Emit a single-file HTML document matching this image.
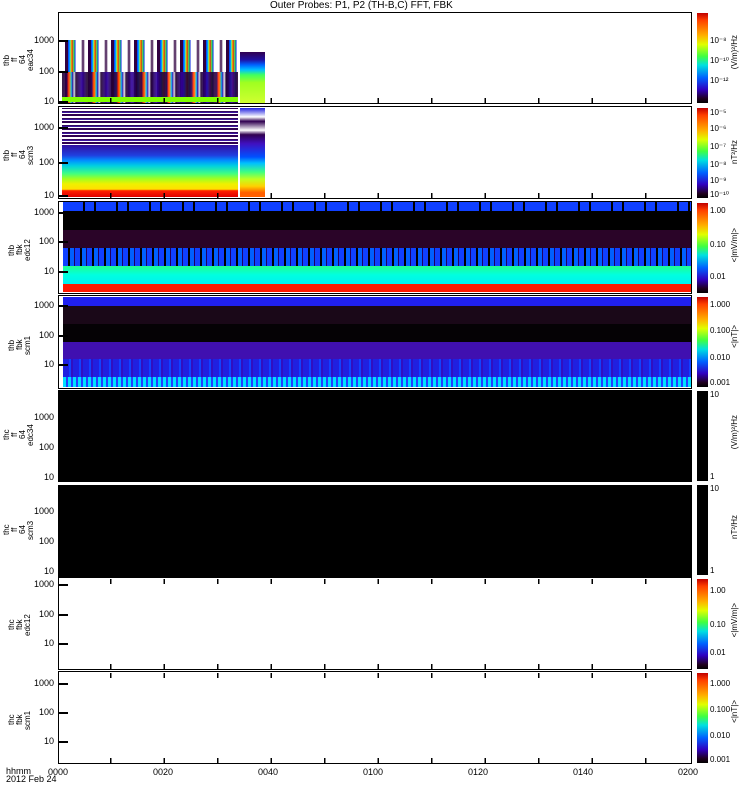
<!DOCTYPE html>
<html><head><meta charset="utf-8"><style>
body{margin:0;width:750px;height:800px;background:#fff;position:relative;overflow:hidden;font-family:"Liberation Sans",sans-serif;font-size:10px;color:#000}
.a{position:absolute}
.p{position:absolute;left:58px;width:634px;border:1.5px solid #000;box-sizing:border-box}
.cb{position:absolute;left:697px;width:11px;background:linear-gradient(#c00000,#ff4000 8%,#ffb000 25%,#e0ff00 35%,#40ff40 48%,#00e0e0 58%,#0060ff 72%,#3000c0 85%,#200020 95%,#000)}
.yl{position:absolute;width:40px;text-align:right;font-size:9px}
.vl{position:absolute;writing-mode:vertical-rl;transform:rotate(180deg);font-size:8px;line-height:8px;text-align:center}
.cl{position:absolute;left:710px;font-size:8px}
.ul{position:absolute;left:730px;writing-mode:vertical-rl;transform:rotate(180deg);font-size:8px}
.tk{position:absolute;left:58px;width:10px;height:1.5px;background:#000}
.xt{position:absolute;left:58px;width:634px;height:5px;background:repeating-linear-gradient(90deg,transparent 0,transparent 52px,#000 52px,#000 53.5px)}
</style></head><body>
<div class="a" style="left:270px;top:0;font-size:10px">Outer Probes: P1, P2 (TH-B,C) FFT, FBK</div>

<!-- panel 1 -->
<div class="a" style="left:62px;top:40px;width:176px;height:63px;background:repeating-linear-gradient(90deg,#fff 0,#fff 3px,#300040 3px,#300040 6px,#0030ff 6px,#00c0ff 8px,#e0ff00 9px,#ff2000 10px,#30ff60 12px,#0020e0 13px,#fff 14px,#fff 19px,#300040 21px,#fff 23px)"></div>
<div class="a" style="left:62px;top:72px;width:176px;height:31px;background:repeating-linear-gradient(90deg,#200030 0,#300050 5px,#ff2000 6px,#ff8000 8px,#00d0ff 9px,#3000a0 11px,#fff 12px,#200030 14px,#3000a0 20px,#200030 25px);opacity:.9"></div>
<div class="a" style="left:62px;top:97px;width:176px;height:5px;background:#80ff00"></div>
<div class="a" style="left:240px;top:52px;width:25px;height:51px;background:linear-gradient(#300050,#2010a0 15%,#0060ff 25%,#00c0ff 35%,#40ff60 45%,#a0ff20 60%,#d0ff30 100%)"></div>
<div class="p" style="top:12px;height:92px"></div>
<!-- panel 2 -->
<div class="a" style="left:62px;top:108px;width:176px;height:38px;background:repeating-linear-gradient(0deg,#fff 0,#fff 2px,#300050 2px,#300050 4px,#fff 4px,#fff 5px,#4020c0 5px,#300040 7px)"></div>
<div class="a" style="left:62px;top:145px;width:176px;height:52px;background:linear-gradient(#3010a0,#2040e0 20%,#0090ff 30%,#00d0e0 40%,#40ff80 55%,#a0ff20 65%,#f0f000 75%,#ffe000 85%,#ff2000 88%,#e00000 100%)"></div>
<div class="a" style="left:240px;top:108px;width:25px;height:89px;background:linear-gradient(#2020e0,#fff 10%,#300050 15%,#fff 25%,#300050 30%,#4010c0 40%,#0050ff 55%,#00c0ff 62%,#40ff80 72%,#c0ff20 80%,#ffd000 88%,#ff6000 95%)"></div>
<div class="p" style="top:106px;height:93px"></div>
<!-- panel 3 -->
<div class="a" style="left:63px;top:202px;width:629px;height:10px;background:repeating-linear-gradient(90deg,#1040ff 0,#1040ff 20px,#000 20px,#000 22px,#1040ff 22px,#1040ff 31px,#000 31px,#000 33px)"></div>
<div class="a" style="left:63px;top:211px;width:629px;height:19px;background:#000"></div>
<div class="a" style="left:63px;top:230px;width:629px;height:18px;background:#2a0428"></div>
<div class="a" style="left:63px;top:248px;width:629px;height:18px;background:repeating-linear-gradient(90deg,#1040ff 0,#1040ff 5px,#000 5px,#000 7px,#0060ff 7px,#0060ff 11px,#200060 11px,#200060 12px)"></div>
<div class="a" style="left:63px;top:266px;width:629px;height:18px;background:linear-gradient(#20ff90,#00ffe0 50%,#00f0f0)"></div>
<div class="a" style="left:63px;top:284px;width:629px;height:8px;background:#ff1800"></div>
<div class="p" style="top:201px;height:93px"></div>
<!-- panel 4 -->
<div class="a" style="left:63px;top:297px;width:629px;height:9px;background:#2020f0"></div>
<div class="a" style="left:63px;top:306px;width:629px;height:18px;background:#1a0818"></div>
<div class="a" style="left:63px;top:324px;width:629px;height:18px;background:#050205"></div>
<div class="a" style="left:63px;top:342px;width:629px;height:17px;background:#4010b0"></div>
<div class="a" style="left:63px;top:359px;width:629px;height:18px;background:repeating-linear-gradient(90deg,#2020e0 0,#2020e0 6px,#1040ff 6px,#1040ff 8px,#3010c0 8px,#3010c0 10px)"></div>
<div class="a" style="left:63px;top:377px;width:629px;height:10px;background:repeating-linear-gradient(90deg,#00e0ff 0,#00e0ff 3px,#2040ff 3px,#2040ff 5px)"></div>
<div class="p" style="top:295px;height:94px"></div>
<!-- panels 5,6 -->
<div class="a" style="left:58px;top:390px;width:634px;height:92px;background:#000"></div>
<div class="a" style="left:58px;top:485px;width:634px;height:92px;background:#000"></div>
<!-- panels 7,8 -->
<div class="p" style="top:577px;height:93px"></div>
<div class="p" style="top:671px;height:93px"></div>

<!-- ticks -->
<div class="tk" style="top:40px"></div><div class="tk" style="top:71px"></div><div class="tk" style="top:101px"></div>
<div class="tk" style="top:127px"></div><div class="tk" style="top:162px"></div><div class="tk" style="top:195px"></div>
<div class="tk" style="top:212px"></div><div class="tk" style="top:241px"></div><div class="tk" style="top:271px"></div>
<div class="tk" style="top:305px"></div><div class="tk" style="top:335px"></div><div class="tk" style="top:364px"></div>
<div class="tk" style="top:584px"></div><div class="tk" style="top:614px"></div><div class="tk" style="top:643px"></div>
<div class="tk" style="top:683px"></div><div class="tk" style="top:712px"></div><div class="tk" style="top:741px"></div>
<div class="xt" style="top:758px"></div><div class="xt" style="top:664px"></div><div class="xt" style="top:98px"></div><div class="xt" style="top:193px"></div><div class="xt" style="top:673px"></div><div class="xt" style="top:579px"></div>

<!-- y labels -->
<div class="yl" style="left:14px;top:35px">1000</div><div class="yl" style="left:14px;top:66px">100</div><div class="yl" style="left:14px;top:96px">10</div>
<div class="yl" style="left:14px;top:122px">1000</div><div class="yl" style="left:14px;top:157px">100</div><div class="yl" style="left:14px;top:190px">10</div>
<div class="yl" style="left:14px;top:207px">1000</div><div class="yl" style="left:14px;top:236px">100</div><div class="yl" style="left:14px;top:266px">10</div>
<div class="yl" style="left:14px;top:300px">1000</div><div class="yl" style="left:14px;top:330px">100</div><div class="yl" style="left:14px;top:359px">10</div>
<div class="yl" style="left:14px;top:412px">1000</div><div class="yl" style="left:14px;top:442px">100</div><div class="yl" style="left:14px;top:472px">10</div>
<div class="yl" style="left:14px;top:506px">1000</div><div class="yl" style="left:14px;top:536px">100</div><div class="yl" style="left:14px;top:566px">10</div>
<div class="yl" style="left:14px;top:579px">1000</div><div class="yl" style="left:14px;top:609px">100</div><div class="yl" style="left:14px;top:638px">10</div>
<div class="yl" style="left:14px;top:678px">1000</div><div class="yl" style="left:14px;top:707px">100</div><div class="yl" style="left:14px;top:736px">10</div>

<div class="vl" style="left:3px;top:40px;height:40px">thb<br>ff<br>64<br>eac34</div>
<div class="vl" style="left:3px;top:135px;height:40px">thb<br>ff<br>64<br>scm3</div>
<div class="vl" style="left:8px;top:230px;height:40px">thb<br>fbk<br>edc12</div>
<div class="vl" style="left:8px;top:325px;height:40px">thb<br>fbk<br>scm1</div>
<div class="vl" style="left:3px;top:415px;height:40px">thc<br>ff<br>64<br>edc34</div>
<div class="vl" style="left:3px;top:510px;height:40px">thc<br>ff<br>64<br>scm3</div>
<div class="vl" style="left:8px;top:605px;height:40px">thc<br>fbk<br>edc12</div>
<div class="vl" style="left:8px;top:700px;height:40px">thc<br>fbk<br>scm1</div>

<!-- colorbars -->
<div class="cb" style="top:13px;height:90px"></div>
<div class="cb" style="top:108px;height:90px"></div>
<div class="cb" style="top:203px;height:90px"></div>
<div class="cb" style="top:297px;height:90px"></div>
<div class="a" style="left:697px;top:391px;width:11px;height:90px;background:#000"></div>
<div class="a" style="left:697px;top:485px;width:11px;height:90px;background:#000"></div>
<div class="cb" style="top:579px;height:90px"></div>
<div class="cb" style="top:673px;height:90px"></div>
<div class="cl" style="top:36px">10⁻⁸</div><div class="cl" style="top:56px">10⁻¹⁰</div><div class="cl" style="top:76px">10⁻¹²</div>
<div class="cl" style="top:108px">10⁻⁵</div><div class="cl" style="top:124px">10⁻⁶</div><div class="cl" style="top:142px">10⁻⁷</div><div class="cl" style="top:160px">10⁻⁸</div><div class="cl" style="top:176px">10⁻⁹</div><div class="cl" style="top:190px">10⁻¹⁰</div>
<div class="cl" style="top:206px">1.00</div><div class="cl" style="top:240px">0.10</div><div class="cl" style="top:272px">0.01</div>
<div class="cl" style="top:300px">1.000</div><div class="cl" style="top:326px">0.100</div><div class="cl" style="top:353px">0.010</div><div class="cl" style="top:378px">0.001</div>
<div class="cl" style="top:390px">10</div><div class="cl" style="top:472px">1</div><div class="cl" style="top:484px">10</div><div class="cl" style="top:566px">1</div>
<div class="cl" style="top:586px">1.00</div><div class="cl" style="top:620px">0.10</div><div class="cl" style="top:648px">0.01</div>
<div class="cl" style="top:679px">1.000</div><div class="cl" style="top:705px">0.100</div><div class="cl" style="top:731px">0.010</div><div class="cl" style="top:755px">0.001</div>
<div class="ul" style="top:35px">(V/m)²/Hz</div><div class="ul" style="top:140px">nT²/Hz</div><div class="ul" style="top:228px">&lt;|mV/m|&gt;</div><div class="ul" style="top:325px">&lt;|nT|&gt;</div>
<div class="ul" style="top:415px">(V/m)²/Hz</div><div class="ul" style="top:515px">nT²/Hz</div><div class="ul" style="top:603px">&lt;|mV/m|&gt;</div><div class="ul" style="top:700px">&lt;|nT|&gt;</div>

<!-- x axis -->
<div class="a" style="left:6px;top:767px;font-size:9px;line-height:8px">hhmm<br>2012 Feb 24</div>
<div class="a" style="left:48px;top:767px;font-size:9px">0000</div>
<div class="a" style="left:153px;top:767px;font-size:9px">0020</div>
<div class="a" style="left:258px;top:767px;font-size:9px">0040</div>
<div class="a" style="left:363px;top:767px;font-size:9px">0100</div>
<div class="a" style="left:468px;top:767px;font-size:9px">0120</div>
<div class="a" style="left:573px;top:767px;font-size:9px">0140</div>
<div class="a" style="left:678px;top:767px;font-size:9px">0200</div>
</body></html>
